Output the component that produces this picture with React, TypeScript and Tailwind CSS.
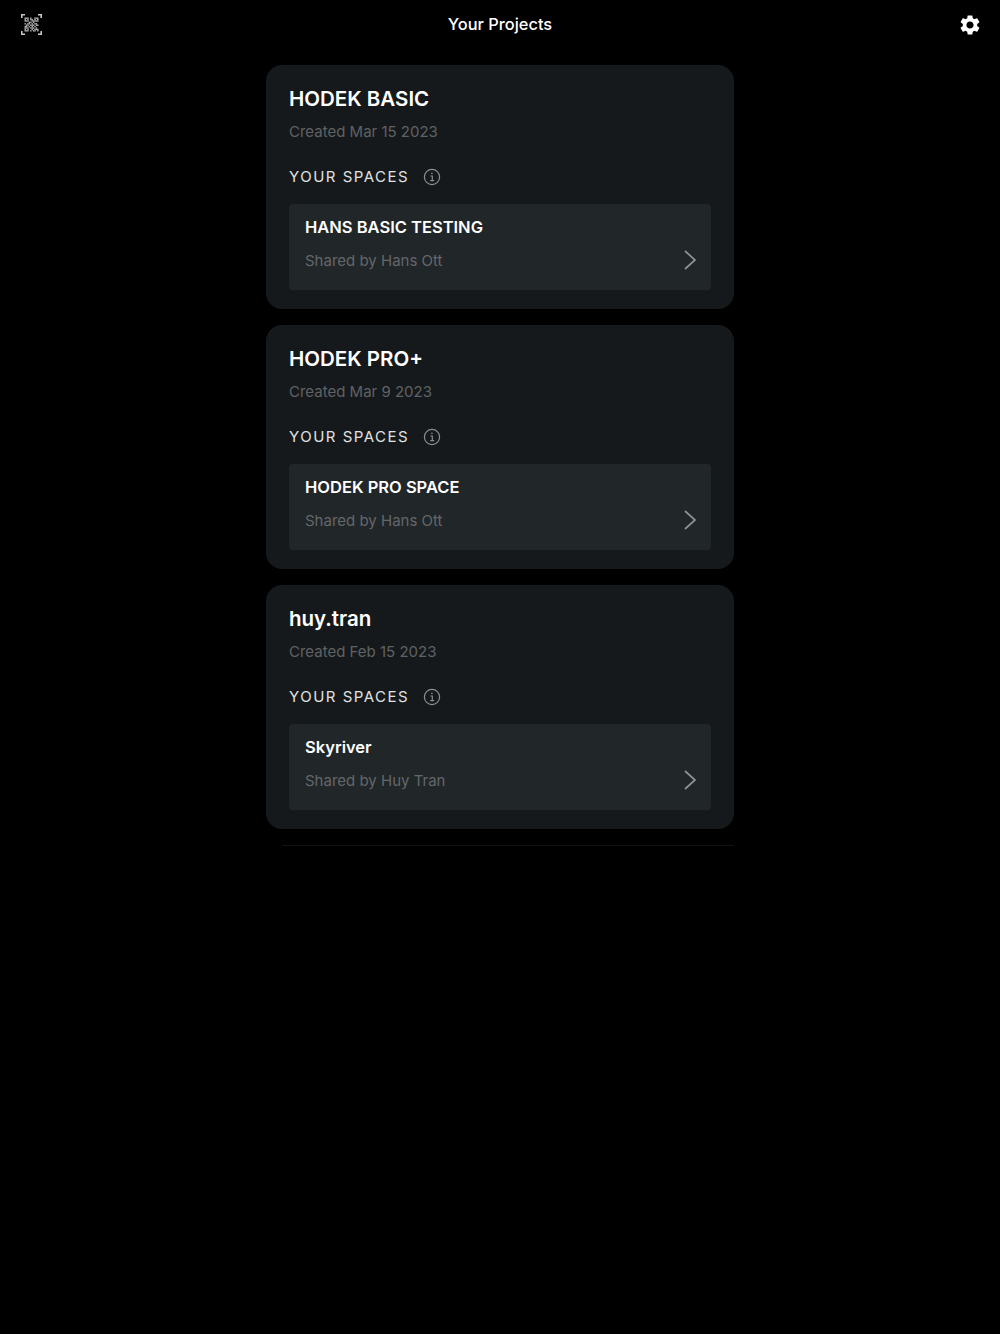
import { MdSettings } from 'react-icons/md';

interface Project {
  name: string;
  created: string;
  space: string;
  owner: string;
}

const projects: Project[] = [
  { name: 'HODEK BASIC', created: 'Created Mar 15 2023', space: 'HANS BASIC TESTING', owner: 'Shared by Hans Ott' },
  { name: 'HODEK PRO+', created: 'Created Mar 9 2023', space: 'HODEK PRO SPACE', owner: 'Shared by Hans Ott' },
  { name: 'huy.tran', created: 'Created Feb 15 2023', space: 'Skyriver', owner: 'Shared by Huy Tran' },
];

// qr modules for the scan icon, 1 = light
const qrRows = [
  '1110100111',
  '1010110101',
  '1110011111',
  '0001101000',
  '1011010110',
  '0110111011',
  '1101010100',
  '1110111010',
  '1010010111',
  '1110101101',
];

function ScanIcon() {
  return (
    <svg width="21" height="21" viewBox="0 0 21 21" fill="none">
      <path d="M.8 4V.8H4M17 .8h3.2V4M20.2 17v3.2H17M4 20.2H.8V17" stroke="#c4c4c4" strokeWidth="1.6" />
      {qrRows.map((row, y) =>
        row.split('').map((cell, x) =>
          cell === '1' ? <rect key={`${x}-${y}`} x={3.5 + x * 1.4} y={3.5 + y * 1.4} width="1.4" height="1.4" fill="#b8b8b8" /> : null
        )
      )}
    </svg>
  );
}

function InfoIcon() {
  return (
    <svg width="18" height="18" viewBox="0 0 18 18" fill="none" stroke="#8b8d8f" strokeWidth="1.2">
      <circle cx="9" cy="9" r="7.6" />
      <path d="M7.4 8h1.9v4.6M7.2 12.7h4" />
      <circle cx="8.9" cy="5.4" r="0.8" fill="#8b8d8f" stroke="none" />
    </svg>
  );
}

function Chevron() {
  return (
    <svg width="12" height="20" viewBox="0 0 12 20" fill="none" className="absolute top-[46px] right-[15px]">
      <path d="M1 1l10 9-10 9" stroke="#8f9193" strokeWidth="1.7" />
    </svg>
  );
}

function ProjectCard({ project }: { project: Project }) {
  return (
    <div className="h-[244px] rounded-[16px] bg-[#16191b] px-[23px] pt-[20px]">
      <h2 className="text-[20.5px] leading-[28px] font-semibold text-white">{project.name}</h2>
      <p className="mt-[7px] text-[15px] leading-[24px] text-[#5f6265]">{project.created}</p>
      <div className="mt-[21px] flex h-6 items-center gap-[14px]">
        <span className="text-[15px] tracking-[0.1em] text-[#e0e1e2]">YOUR SPACES</span>
        <InfoIcon />
      </div>
      <div className="relative mt-[15px] h-[86px] rounded-[4px] bg-[#212629] px-4 pt-[11px]">
        <h3 className="text-[16.5px] leading-6 font-semibold text-white">{project.space}</h3>
        <p className="mt-[10px] text-[15px] leading-6 text-[#64676a]">{project.owner}</p>
        <Chevron />
      </div>
    </div>
  );
}

export default function App() {
  return (
    <div className="min-h-[1334px] bg-black font-['Inter','Liberation_Sans',sans-serif]">
      <header className="flex h-[49px] items-center justify-between pr-[18px] pl-[21px]">
        <ScanIcon />
        <h1 className="text-[16.4px] font-medium text-white">Your Projects</h1>
        <MdSettings size={24} className="text-white" />
      </header>
      <main className="mx-auto mt-[16px] flex w-[468px] flex-col gap-4">
        {projects.map((project) => (
          <ProjectCard key={project.name} project={project} />
        ))}
        <div className="ml-4 h-px bg-[#0f1112]" />
      </main>
    </div>
  );
}
